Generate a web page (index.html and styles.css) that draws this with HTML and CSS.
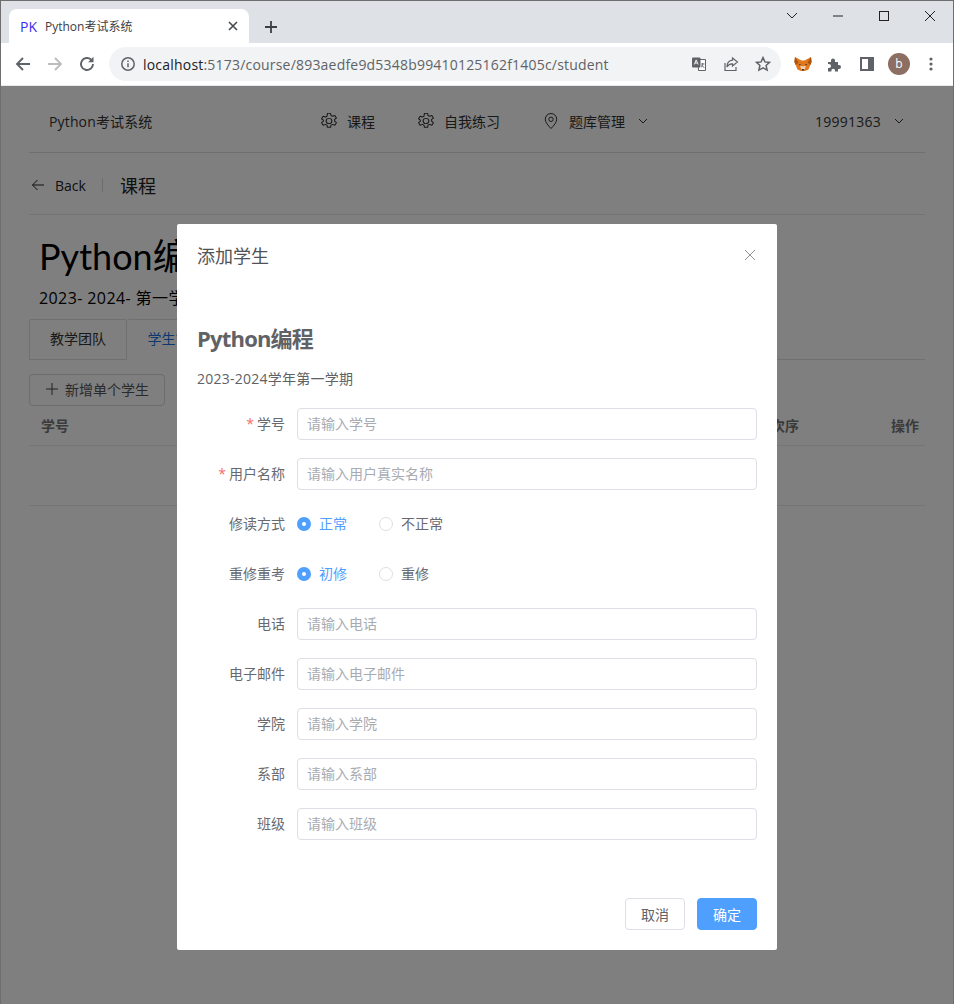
FILE: index.html
```html
<!DOCTYPE html>
<html lang="zh-CN">
<head>
  <meta charset="UTF-8">
  <title>Python考试系统</title>
  <link rel="stylesheet" href="styles.css">
</head>
<body>
  <div class="window">
    <div class="tabstrip">
      <div class="tab">
        <span class="tab-favicon">PK</span>
        <span class="tab-title">Python考试系统</span>
        <svg class="tab-close" width="12" height="12" viewBox="0 0 12 12"><path d="M2 2l8 8M10 2l-8 8" stroke="#45494d" stroke-width="1.6" fill="none"/></svg>
      </div>
      <svg class="new-tab" width="14" height="14" viewBox="0 0 14 14"><path d="M7 1v12M1 7h12" stroke="#3c4043" stroke-width="1.8" fill="none"/></svg>
      <div class="win-controls">
        <svg width="46" height="30" viewBox="0 0 46 30"><path d="M18 12l5 5 5-5" stroke="#222" fill="none"/></svg>
        <svg width="46" height="30" viewBox="0 0 46 30"><path d="M18 15h10" stroke="#222" fill="none"/></svg>
        <svg width="46" height="30" viewBox="0 0 46 30"><rect x="18.5" y="10.5" width="9" height="9" stroke="#222" fill="none"/></svg>
        <svg width="46" height="30" viewBox="0 0 46 30"><path d="M18 10l10 10M28 10l-10 10" stroke="#222" fill="none"/></svg>
      </div>
    </div>

    <div class="toolbar">
      <svg class="tool" width="18" height="18" viewBox="0 0 18 18"><path d="M16 9H3M9 3L3 9l6 6" stroke="#5f6368" stroke-width="1.9" fill="none"/></svg>
      <svg class="tool" width="18" height="18" viewBox="0 0 18 18"><path d="M2 9h13M9 3l6 6-6 6" stroke="#babcbe" stroke-width="1.9" fill="none"/></svg>
      <svg class="tool tool-last" width="18" height="18" viewBox="0 0 18 18"><path d="M15 9a6 6 0 1 1-1.8-4.3" stroke="#5f6368" stroke-width="1.9" fill="none"/><path d="M15.5 1.8v5.4h-5.4z" fill="#5f6368"/></svg>
      <div class="omnibox">
        <svg class="info-icon" width="16" height="16" viewBox="0 0 16 16"><circle cx="8" cy="8" r="6.2" stroke="#5f6368" stroke-width="1.5" fill="none"/><path d="M8 7.2v4M8 4.6v1.5" stroke="#5f6368" stroke-width="1.5"/></svg>
        <span class="url"><span class="url-host">localhost</span>:5173/course/893aedfe9d5348b99410125162f1405c/student</span>
        <div class="omni-actions">
          <svg width="16" height="16" viewBox="0 0 16 16"><path d="M7 3.500h7.500v11h-7z" fill="#fff" stroke="#5f6368"/><rect x="1" y="1.500" width="8.500" height="10" rx="1" fill="#5f6368"/><path d="M3.300 8.500l1.900-4.600 1.900 4.600M4 7h2.400" stroke="#fff" stroke-width=".9" fill="none"/><path d="M10 8h3.500M11.700 7v1.200c0 1.600-.8 2.600-1.700 3.200M10.600 9.200c.5 1 1.500 1.800 2.700 2.200" stroke="#5f6368" stroke-width=".9" fill="none"/></svg>
          <svg width="16" height="16" viewBox="0 0 16 16"><path d="M2 7v7.500h11V11" stroke="#5f6368" stroke-width="1.2" fill="none"/><path d="M9.500 2l5 4-5 4V7.800C7 7.600 5.200 8.600 4 11c0-3.600 2.200-6.400 5.500-6.800z" stroke="#5f6368" stroke-width="1.2" fill="none"/></svg>
          <svg width="16" height="16" viewBox="0 0 16 16"><path d="M8 1.600l1.900 4.300 4.600.5-3.400 3.100 1 4.600L8 11.800l-4.100 2.300 1-4.600L1.500 6.400l4.600-.5z" stroke="#5f6368" stroke-width="1.500" fill="none"/></svg>
        </div>
      </div>
      <div class="ext-icons">
        <svg width="18" height="16" viewBox="0 0 18 16"><path d="M1 1l6.500 3.500h3L17 1l.6 5-1.300 3-1.800 4.500L11 15H7l-3.500-1.500L1.700 9 .4 6z" fill="#e2761b"/><path d="M1 1l3.500 5.500L1.700 9 .4 6zM17 1l-3.500 5.500L16.300 9l1.300-3z" fill="#a65416"/><path d="M6 9.500l3 1 3-1-1.500 4.500h-3z" fill="#f3d3b4"/><path d="M7.500 13h3L9 15z" fill="#2d2d2d"/><path d="M4.800 8l2.200.4-1 1.400zM13.200 8l-2.200.4 1 1.400z" fill="#2d2d2d"/></svg>
        <svg width="16" height="16" viewBox="0 0 16 16"><path d="M1 6h3V4.500a2 2 0 0 1 4 0V6h3v3h1a2 2 0 0 1 0 4h-1v2.500H8v-1a1.800 1.800 0 0 0-3.600 0v1H1V12h1a2 2 0 0 0 0-4H1z" fill="#5f6368"/></svg>
        <svg class="side-panel" width="14" height="14" viewBox="0 0 14 14"><path d="M0 0h14v14H0z" fill="#5f6368"/><path d="M2 2h6v10H2z" fill="#fff"/></svg>
        <span class="avatar">b</span>
        <svg class="dots" width="4" height="14" viewBox="0 0 4 14"><circle cx="2" cy="2" r="1.600" fill="#5f6368"/><circle cx="2" cy="7" r="1.600" fill="#5f6368"/><circle cx="2" cy="12" r="1.600" fill="#5f6368"/></svg>
      </div>
    </div>

    <div class="page">
      <header class="app-header">
        <div class="brand">Python考试系统</div>
        <nav class="menu">
          <span class="menu-item">
            <svg class="gear" width="16" height="16" viewBox="1.3 .7 13.4 14.6" preserveAspectRatio="none"><path d="M6.700 1h2.600l.4 2 1.300.7 1.900-.7 1.300 2.300-1.500 1.300v1.600l1.500 1.300-1.300 2.300-1.900-.7-1.300.7-.4 2H6.700l-.4-2-1.300-.7-1.900.7-1.300-2.300 1.500-1.300V7.300L1.800 6l1.300-2.300 1.900.7 1.300-.7z" stroke="#333" stroke-width=".9" stroke-linejoin="round" fill="none"/><circle cx="8" cy="8" r="2.400" stroke="#333" stroke-width=".9" fill="none"/></svg>
            课程
          </span>
          <span class="menu-item">
            <svg class="gear" width="16" height="16" viewBox="1.3 .7 13.4 14.6" preserveAspectRatio="none"><path d="M6.700 1h2.600l.4 2 1.300.7 1.900-.7 1.300 2.300-1.500 1.300v1.600l1.500 1.300-1.300 2.300-1.900-.7-1.300.7-.4 2H6.700l-.4-2-1.300-.7-1.900.7-1.300-2.300 1.500-1.300V7.300L1.800 6l1.300-2.300 1.900.7 1.300-.7z" stroke="#333" stroke-width=".9" stroke-linejoin="round" fill="none"/><circle cx="8" cy="8" r="2.400" stroke="#333" stroke-width=".9" fill="none"/></svg>
            自我练习
          </span>
          <span class="menu-item">
            <svg class="gear" width="16" height="16" viewBox="0 0 16 16"><path d="M8 15.500C5 12.300 2.300 9.500 2.300 6.200a5.700 5.700 0 0 1 11.400 0c0 3.300-2.700 6.100-5.700 9.300z" stroke="#333" fill="none"/><circle cx="8" cy="6.300" r="2.200" stroke="#333" fill="none"/></svg>
            题库管理
            <svg class="caret" width="10" height="10" viewBox="0 0 10 10"><path d="M1 3l4 4 4-4" stroke="#333" fill="none"/></svg>
          </span>
        </nav>
        <div class="user">19991363
          <svg class="caret" width="10" height="10" viewBox="0 0 10 10"><path d="M1 3l4 4 4-4" stroke="#333" fill="none"/></svg>
        </div>
      </header>

      <div class="page-head">
        <span class="back">
          <svg width="14" height="14" viewBox="0 0 14 14"><path d="M13 7H1.500M6.500 2L1.500 7l5 5" stroke="#222" fill="none"/></svg>
          Back
        </span>
        <span class="head-divider"></span>
        <span class="head-title">课程</span>
      </div>

      <section class="course">
        <h1>Python编程</h1>
        <p>2023- 2024- 第一学期</p>
      </section>

      <div class="tabs">
        <div class="tabs-tab">教学团队</div>
        <div class="tabs-tab is-active">学生管理</div>
      </div>

      <button class="add-btn" type="button">
        <svg width="12" height="12" viewBox="0 0 12 12"><path d="M6 0v12M0 6h12" stroke="#444" fill="none"/></svg>
        新增单个学生
      </button>

      <div class="table-head">
        <span>学号</span>
        <span class="col-order">次序</span>
        <span class="col-action">操作</span>
      </div>
      <div class="table-empty"></div>
    </div>

    <div class="mask">
      <div class="dialog">
        <div class="dialog-header">
          <span>添加学生</span>
          <svg width="12" height="12" viewBox="0 0 12 12"><path d="M1 1l10 10M11 1L1 11" stroke="#909399" fill="none"/></svg>
        </div>
        <div class="dialog-body">
          <h2>Python编程</h2>
          <p class="term">2023-2024学年第一学期</p>
          <form class="form">
            <div class="form-row">
              <label class="is-required">学号</label>
              <div class="input">请输入学号</div>
            </div>
            <div class="form-row">
              <label class="is-required">用户名称</label>
              <div class="input">请输入用户真实名称</div>
            </div>
            <div class="form-row">
              <label>修读方式</label>
              <div class="radios">
                <span class="radio is-checked"><i></i>正常</span>
                <span class="radio"><i></i>不正常</span>
              </div>
            </div>
            <div class="form-row">
              <label>重修重考</label>
              <div class="radios">
                <span class="radio is-checked"><i></i>初修</span>
                <span class="radio"><i></i>重修</span>
              </div>
            </div>
            <div class="form-row">
              <label>电话</label>
              <div class="input">请输入电话</div>
            </div>
            <div class="form-row">
              <label>电子邮件</label>
              <div class="input">请输入电子邮件</div>
            </div>
            <div class="form-row">
              <label>学院</label>
              <div class="input">请输入学院</div>
            </div>
            <div class="form-row">
              <label>系部</label>
              <div class="input">请输入系部</div>
            </div>
            <div class="form-row">
              <label>班级</label>
              <div class="input">请输入班级</div>
            </div>
          </form>
        </div>
        <div class="dialog-footer">
          <button class="btn" type="button">取消</button>
          <button class="btn btn-primary" type="button">确定</button>
        </div>
      </div>
    </div>
  </div>
</body>
</html>
```

FILE: styles.css
```css
* {
  box-sizing: border-box;
}

body {
  margin: 0;
  font-family: "Open Sans", "Noto Sans CJK SC", sans-serif;
  font-size: 14px;
  color: #333;
  background: #fff;
}

.window {
  position: relative;
  width: 954px;
  height: 1004px;
  border: 1px solid #6e6e6e;
  border-bottom: 0;
  overflow: hidden;
}

/* browser chrome */
.tabstrip {
  display: flex;
  align-items: flex-end;
  height: 42px;
  padding-left: 8px;
  background: #dee1e6;
}

.tab {
  display: flex;
  align-items: center;
  width: 240px;
  height: 34px;
  padding: 0 10px 0 11px;
  background: #fff;
  border-radius: 8px 8px 0 0;
}

.tab-favicon {
  width: 25px;
  font-size: 14px;
  color: #3a2cf0;
}

.tab-title {
  flex: 1;
  font-size: 12px;
  color: #3c4043;
}

.new-tab {
  margin: 0 0 9px 15px;
}

.win-controls {
  display: flex;
  margin-left: auto;
  align-self: flex-start;
}

.toolbar {
  display: flex;
  align-items: center;
  height: 43px;
  padding: 0 0 1px 13px;
  background: #fff;
  border-bottom: 1px solid #e8eaed;
}

.tool {
  margin-right: 14px;
}

.tool-last {
  margin-right: 13px;
}

.omnibox {
  display: flex;
  align-items: center;
  width: 672px;
  height: 34px;
  padding: 0 10px 0 11px;
  background: #f1f3f4;
  border-radius: 17px;
}

.url {
  margin-left: 7px;
  padding-top: 1px;
  font-size: 14px;
  letter-spacing: 0.2px;
  color: #5f6368;
  white-space: nowrap;
}

.url-host {
  color: #202124;
}

.omni-actions {
  display: flex;
  gap: 16px;
  margin-left: auto;
}

.ext-icons {
  display: flex;
  align-items: center;
  margin-left: 13px;
  gap: 15px;
}

.side-panel {
  margin-left: 2px;
}

.avatar {
  display: flex;
  align-items: center;
  justify-content: center;
  width: 22px;
  height: 22px;
  margin-left: -1px;
  border-radius: 50%;
  background: #8d6e63;
  color: #fff;
  font-size: 12px;
}

.dots {
  margin-left: 4px;
}

/* course page behind the mask */
.page {
  padding: 0 28px;
}

.app-header {
  display: flex;
  align-items: center;
  height: 67px;
  padding-top: 3px;
  border-bottom: 1px solid #dedede;
}

.brand {
  width: 292px;
  padding-left: 20px;
  letter-spacing: 0.15px;
}

.menu {
  display: flex;
  gap: 43px;
}

.menu-item {
  display: flex;
  align-items: center;
}

.gear {
  margin-right: 10px;
}

.caret {
  margin-left: 13px;
}

.user {
  display: flex;
  align-items: center;
  margin-left: auto;
  padding: 1px 21px 0 0;
  letter-spacing: 0.25px;
}

.page-head {
  display: flex;
  align-items: center;
  height: 62px;
  padding: 3px 0 0 2px;
  border-bottom: 1px solid #e6e6e6;
  color: #222;
}

.back {
  display: flex;
  align-items: center;
  gap: 10px;
}

.head-divider {
  width: 1px;
  height: 14px;
  margin: 0 17px 0 16px;
  background: #d8d8d8;
}

.head-title {
  font-size: 18px;
}

.course {
  padding: 16px 0 0 10px;
  color: #000;
}

.course h1 {
  margin: 0;
  font-family: Lato, "Noto Sans CJK SC", sans-serif;
  font-size: 36px;
  font-weight: 400;
  line-height: 50px;
}

.course p {
  margin: 6px 0 0;
  font-size: 16px;
  line-height: 22px;
  letter-spacing: 0.4px;
}

.tabs {
  display: flex;
  height: 41px;
  margin-top: 10px;
  border-bottom: 1px solid #e0e0e0;
}

.tabs-tab {
  display: flex;
  align-items: center;
  justify-content: center;
  width: 98px;
  height: 41px;
  padding-bottom: 3px;
  border: 1px solid #e0e0e0;
  border-radius: 2px 2px 0 0;
}

.tabs-tab.is-active {
  border-left: 0;
  border-bottom-color: #fff;
  color: #1a6fe0;
}

.add-btn {
  display: flex;
  align-items: center;
  gap: 7px;
  width: 136px;
  height: 32px;
  margin-top: 14px;
  padding: 0 0 2px 16px;
  background: #fff;
  border: 1px solid #d9d9d9;
  border-radius: 4px;
  font: inherit;
  color: #555;
}

.table-head {
  display: flex;
  align-items: center;
  height: 40px;
  padding: 0 6px 2px 12px;
  border-bottom: 1px solid #ebebeb;
  font-weight: 700;
  color: #777;
}

.col-order {
  margin-left: auto;
  margin-right: 92px;
}

.table-empty {
  height: 60px;
  border-bottom: 1px solid #ebebeb;
}

/* dialog */
.mask {
  position: absolute;
  top: 85px;
  left: -1px;
  right: -1px;
  bottom: 0;
  display: flex;
  justify-content: center;
  align-items: flex-start;
  padding-top: 138px;
  background: rgba(0, 0, 0, 0.5);
}

.dialog {
  width: 600px;
  height: 726px;
  background: #fff;
  border-radius: 2px;
  color: #686a70;
}

.dialog-header {
  display: flex;
  align-items: center;
  justify-content: space-between;
  height: 62px;
  padding: 0 21px 0 20px;
  font-size: 18px;
  color: #505256;
}

.dialog-body {
  padding: 30px 20px 0;
}

.dialog-body h2 {
  margin: 0;
  font-size: 22px;
  line-height: 44px;
  font-weight: 700;
  letter-spacing: -0.8px;
  color: #606266;
}

.term {
  margin: 6px 0 0;
  line-height: 26px;
  letter-spacing: 0.25px;
  color: #606266;
}

.form {
  display: flex;
  flex-direction: column;
  gap: 18px;
  margin-top: 16px;
}

.form-row {
  display: flex;
  align-items: center;
  height: 32px;
}

.form-row label {
  width: 88px;
  margin-right: 12px;
  padding-bottom: 2px;
  text-align: right;
}

.is-required::before {
  content: "*";
  margin-right: 3px;
  color: #f56c6c;
}

.input {
  flex: 1;
  height: 32px;
  padding: 0 9px;
  line-height: 30px;
  border: 1px solid #dcdfe6;
  border-radius: 4px;
  color: #a8abb2;
}

.radios {
  display: flex;
  padding-bottom: 2px;
}

.radio {
  display: flex;
  align-items: center;
  gap: 8px;
  margin-right: 32px;
}

.radio i {
  width: 14px;
  height: 14px;
  margin-top: 2px;
  border: 1px solid #dcdfe6;
  border-radius: 50%;
}

.radio.is-checked {
  color: #4f9fff;
}

.radio.is-checked i {
  border: 5px solid #4f9fff;
  background: #fff;
}

.dialog-footer {
  display: flex;
  justify-content: flex-end;
  gap: 12px;
  margin-top: 58px;
  padding-right: 20px;
}

.btn {
  width: 60px;
  height: 32px;
  padding: 0;
  font: inherit;
  color: #606266;
  background: #fff;
  border: 1px solid #dcdfe6;
  border-radius: 4px;
}

.btn-primary {
  color: #fff;
  background: #4f9fff;
  border-color: #4f9fff;
}
```
